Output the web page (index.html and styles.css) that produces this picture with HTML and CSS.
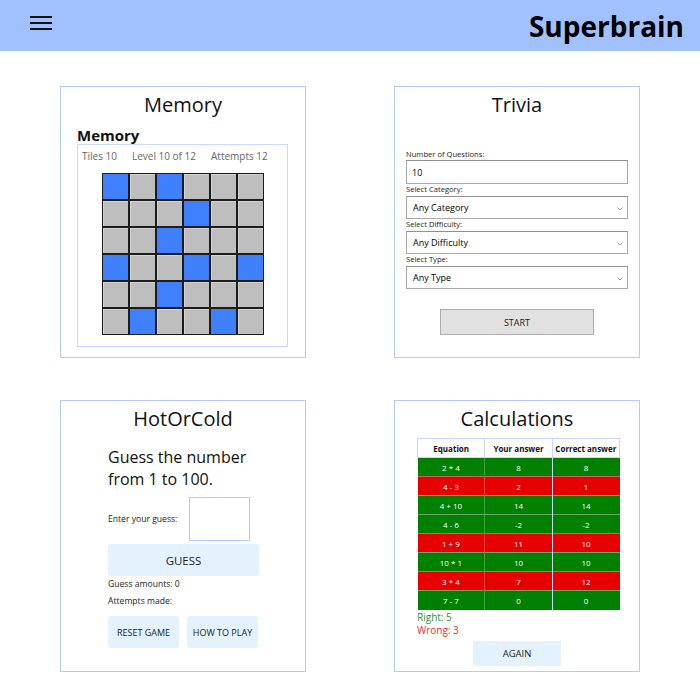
FILE: index.html
```html
<!DOCTYPE html>
<html>
<head>
<meta charset="utf-8">
<link rel="stylesheet" href="styles.css">
</head>
<body>
<header class="topbar">
  <button class="menu-btn" aria-label="menu">
    <svg width="22" height="14" viewBox="0 0 22 14"><rect x="0" y="0" width="22" height="2" fill="#111"/><rect x="0" y="6" width="22" height="2" fill="#111"/><rect x="0" y="12" width="22" height="2" fill="#111"/></svg>
  </button>
  <h1 class="brand">Superbrain</h1>
</header>

<main class="cards">
  <section class="card">
    <h2 class="card-title">Memory</h2>
    <div class="memory">
      <h3 class="memory-head">Memory</h3>
      <div class="memory-box">
        <div class="stats"><span>Tiles 10</span><span>Level 10 of 12</span><span>Attempts 12</span></div>
        <div class="board">
          <div class="tile on"></div><div class="tile"></div><div class="tile on"></div><div class="tile"></div><div class="tile"></div><div class="tile"></div>
          <div class="tile"></div><div class="tile"></div><div class="tile"></div><div class="tile on"></div><div class="tile"></div><div class="tile"></div>
          <div class="tile"></div><div class="tile"></div><div class="tile on"></div><div class="tile"></div><div class="tile"></div><div class="tile"></div>
          <div class="tile on"></div><div class="tile"></div><div class="tile"></div><div class="tile on"></div><div class="tile"></div><div class="tile on"></div>
          <div class="tile"></div><div class="tile"></div><div class="tile on"></div><div class="tile"></div><div class="tile"></div><div class="tile"></div>
          <div class="tile"></div><div class="tile on"></div><div class="tile"></div><div class="tile"></div><div class="tile on"></div><div class="tile"></div>
        </div>
      </div>
    </div>
  </section>

  <section class="card">
    <h2 class="card-title">Trivia</h2>
    <form class="trivia">
      <label class="t-label">Number of Questions:</label>
      <div class="t-field">10</div>
      <label class="t-label">Select Category:</label>
      <div class="t-field t-select">Any Category<svg class="chev" width="6" height="4" viewBox="0 0 6 4"><path d="M0.5 0.5 L3 3 L5.5 0.5" fill="none" stroke="#888" stroke-width="0.9"/></svg></div>
      <label class="t-label">Select Difficulty:</label>
      <div class="t-field t-select">Any Difficulty<svg class="chev" width="6" height="4" viewBox="0 0 6 4"><path d="M0.5 0.5 L3 3 L5.5 0.5" fill="none" stroke="#888" stroke-width="0.9"/></svg></div>
      <label class="t-label">Select Type:</label>
      <div class="t-field t-select">Any Type<svg class="chev" width="6" height="4" viewBox="0 0 6 4"><path d="M0.5 0.5 L3 3 L5.5 0.5" fill="none" stroke="#888" stroke-width="0.9"/></svg></div>
      <div class="start-row"><button type="button" class="start-btn">START</button></div>
    </form>
  </section>

  <section class="card">
    <h2 class="card-title">HotOrCold</h2>
    <div class="hoc">
      <p class="hoc-lead">Guess the number from 1 to 100.</p>
      <div class="guess-row"><span class="small">Enter your guess:</span><div class="guess-input"></div></div>
      <button class="soft-btn guess-btn">GUESS</button>
      <p class="small line">Guess amounts: 0</p>
      <p class="small line">Attempts made:</p>
      <div class="hoc-actions"><button class="soft-btn act-btn">RESET GAME</button><button class="soft-btn act-btn">HOW TO PLAY</button></div>
    </div>
  </section>

  <section class="card">
    <h2 class="card-title">Calculations</h2>
    <div class="calc">
      <table class="calc-table">
        <thead><tr><th>Equation</th><th>Your answer</th><th>Correct answer</th></tr></thead>
        <tbody>
          <tr class="ok"><td>2 * 4</td><td>8</td><td>8</td></tr>
          <tr class="bad"><td>4 - 3</td><td>2</td><td>1</td></tr>
          <tr class="ok"><td>4 + 10</td><td>14</td><td>14</td></tr>
          <tr class="ok"><td>4 - 6</td><td>-2</td><td>-2</td></tr>
          <tr class="bad"><td>1 + 9</td><td>11</td><td>10</td></tr>
          <tr class="ok"><td>10 * 1</td><td>10</td><td>10</td></tr>
          <tr class="bad"><td>3 * 4</td><td>7</td><td>12</td></tr>
          <tr class="ok"><td>7 - 7</td><td>0</td><td>0</td></tr>
        </tbody>
      </table>
      <p class="score right">Right: 5</p>
      <p class="score wrong">Wrong: 3</p>
      <div class="again-row"><button class="soft-btn again-btn">AGAIN</button></div>
    </div>
  </section>
</main>
</body>
</html>
```

FILE: styles.css
```css
* { box-sizing: border-box; }
html, body { margin: 0; padding: 0; background: #fff; }
body { font-family: "Open Sans", "Noto Sans", sans-serif; color: #111; width: 700px; }

.topbar {
  height: 51px;
  background: #a0c0fe;
  display: flex;
  align-items: center;
  justify-content: space-between;
  padding: 0 16px 0 30px;
}
.menu-btn { background: none; border: 0; padding: 0; margin-top: -6px; display: flex; }
.brand { margin: 0; font-size: 28px; font-weight: 700; color: #000; letter-spacing: 0; }

.cards {
  display: grid;
  grid-template-columns: 246px 246px;
  justify-content: space-between;
  padding: 35px 60px 0 60px;
  row-gap: 42px;
}
.card {
  height: 272px;
  border: 1px solid #b4cbf9;
  display: flex;
  flex-direction: column;
  align-items: stretch;
}
.card-title {
  margin: 0;
  font-size: 20px;
  font-weight: 400;
  text-align: center;
  line-height: 26px;
  padding-top: 5px;
  color: #111;
}

/* Memory */
.memory { padding: 8px 17px 0 16px; }
.memory-head { margin: 0; font-size: 15px; font-weight: 700; line-height: 18px; }
.memory-box {
  margin-top: 0;
  height: 203px;
  border: 1px solid #c8d8fa;
  padding: 4px 0 0 0;
}
.stats { display: flex; gap: 15px; padding-left: 4px; font-size: 10px; color: #666; line-height: 15px; }
.board {
  margin: 9px auto 0;
  width: 162px;
  display: grid;
  grid-template-columns: repeat(6, 27px);
  grid-auto-rows: 27px;
}
.tile { background: #bebebe; border: 1px solid #1c1c1c; box-shadow: inset 1px 1px 0 #d4d4d4; }
.tile.on { background: #3f80fe; box-shadow: none; }

/* Trivia */
.trivia { display: flex; flex-direction: column; padding: 31px 11px 0 11px; }
.t-label { font-size: 7.6px; line-height: 11px; color: #222; }
.t-field {
  height: 24px;
  border: 1px solid #a9a9a9;
  border-top-color: #8f8f8f;
  font-family: "Open Sans", sans-serif;
  font-size: 9px;
  padding-left: 5px;
  display: flex;
  align-items: center;
  position: relative;
  color: #000;
}
.t-select { height: 23px; padding-left: 6px; margin-top: 1px; }
.chev { position: absolute; right: 4px; top: 10px; }
.start-row { display: flex; justify-content: center; margin-top: 20px; }
.start-btn {
  width: 154px; height: 26px;
  background: #e1e1e1;
  border: 1px solid #adadad;
  font-family: "Open Sans", sans-serif;
  font-size: 9px;
  color: #222;
}

/* HotOrCold */
.hoc { padding: 0 47px 0 47px; }
.hoc-lead { margin: 14px 0 0 0; font-size: 16px; line-height: 22px; color: #111; }
.guess-row { display: flex; align-items: center; gap: 12px; margin-top: 7px; }
.small { font-size: 8.6px; color: #222; }
.guess-input { width: 61px; height: 44px; border: 1px solid #b4cbf9; }
.soft-btn {
  background: #e3f2fd;
  border: 0;
  border-radius: 3px;
  font-family: "Open Sans", sans-serif;
  color: #222;
}
.guess-btn { display: block; width: 151px; height: 32px; margin-top: 3px; font-size: 11.5px; }
.line { margin: 0; line-height: 17px; }
.hoc > .line:first-of-type { margin-top: 3px; }
.hoc-actions { display: flex; gap: 8px; margin-top: 6px; }
.act-btn { width: 72px; height: 32px; font-size: 9px; padding: 0; }

/* Calculations */
.calc { padding: 6px 19px 0 22px; }
.calc-table { width: 203px; border-collapse: collapse; font-size: 8px; table-layout: fixed; }
.calc-table th {
  height: 19px; font-weight: 700; color: #111; background: #fff;
  border: 1px solid #c8d8fa; padding: 0;
}
.calc-table td {
  height: 19px; text-align: center; color: #fff; padding: 0;
  border-top: 1px solid #6aa86a;
}
.calc-table td + td { border-left: 1px solid rgba(255,255,255,0.25); }
.calc-table td:nth-child(3) { border-left: 1px solid #c8d8fa; }
.calc-table tr.ok td { background: #008000; }
.calc-table tr.bad td { background: #e60000; border-top-color: #d86060; }
.score { margin: 0; font-size: 10px; line-height: 13px; }
.score.right { color: #2d8f2d; margin-top: 1px; }
.score.wrong { color: #f02a2a; }
.again-row { display: flex; justify-content: center; margin-top: 4px; padding-right: 3px; }
.again-btn { width: 88px; height: 25px; font-size: 9.5px; border-radius: 0; }
```
